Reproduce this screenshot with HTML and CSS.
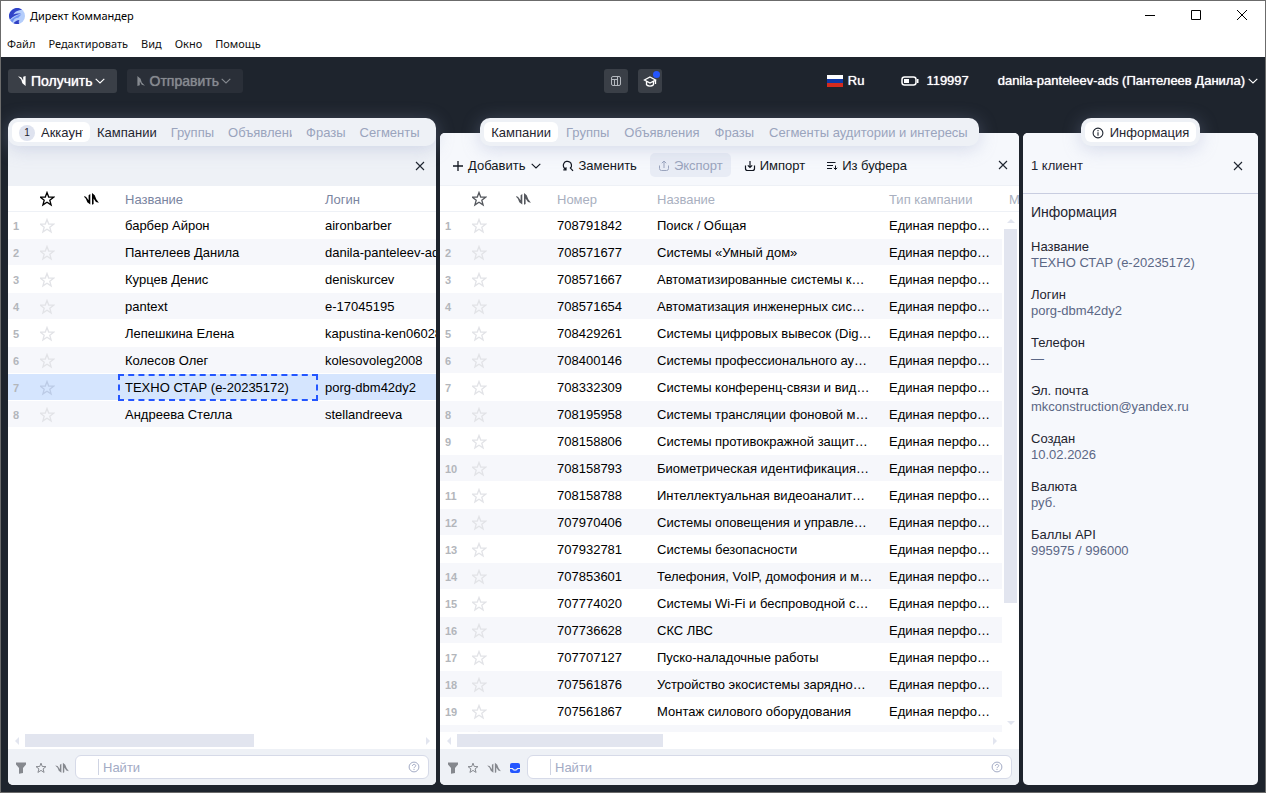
FILE: index.html
```html
<!DOCTYPE html>
<html lang="ru">
<head>
    <meta charset="UTF-8">
    <meta name="viewport" content="width=device-width, initial-scale=1.0">
    <title>Директ Коммандер</title>
    <link rel="stylesheet" href="styles.css">
</head>
<body>
    <svg class="sprite" aria-hidden="true">
        <symbol id="star" viewBox="0 0 16 16"><path d="M8 1.500l1.700 4.500 4.900.2-3.800 3 1.300 4.700L8 11.200l-4.100 2.700 1.300-4.700-3.800-3 4.900-.2z" fill="none" stroke="currentColor" stroke-width="1.300"/></symbol>
        <symbol id="get" viewBox="0 0 8 10"><path d="M0 .3L3.200 1.200 5.200 4.500V.8L7.600 0v10L4.400 7.200 3.200 3.600z" fill="currentColor"/></symbol>
        <symbol id="send" viewBox="0 0 8 10"><path d="M.4 0L3.600 2.800 4.800 6.400l3.200 3.300-3.200-.9L2.800 5.500v3.700L.4 10z" fill="currentColor"/></symbol>
        <symbol id="direct" viewBox="0 0 16 16"><path d="M.2 5l2.800.7 2.600 3.600V4.200L7.300 3v10.500L4.300 11.200 2.900 7.700zM9 2l2.700 2.300 1.600 3.900 2.600 3.500-2.900-.8-2.400-3.400v5.400L9 13.800z" fill="currentColor"/></symbol>
        <symbol id="chevron" viewBox="0 0 10 6"><path d="M.7.8L5 5 9.300.8" fill="none" stroke="currentColor" stroke-width="1.100"/></symbol>
        <symbol id="close" viewBox="0 0 10 10"><path d="M1 1l8 8M9 1L1 9" fill="none" stroke="currentColor" stroke-width="1.100"/></symbol>
        <symbol id="filter" viewBox="0 0 12 12"><path d="M1 .5h10v2L8 6v5l-4 .8V6L1 2.500z" fill="currentColor"/></symbol>
        <symbol id="help" viewBox="0 0 12 12"><g fill="none" stroke="currentColor"><circle cx="6" cy="6" r="4.900"/><path d="M4.400 5c0-2.200 3.300-2.100 3.300-.2C7.700 5.900 6 5.900 6 7.200M6 8v1"/></g></symbol>
    </svg>

    <header class="titlebar">
        <svg class="logo" viewBox="0 0 16 16">
            <circle cx="8" cy="8" r="8" fill="#b4cdfb"/>
            <path d="M.9 11.500A8 8 0 0 1 13.200 1.900C9 2 5.500 3.500 4.500 6.500c2-1 5-1.300 7.500-.8C8 6.500 3.500 8.500.9 11.500z" fill="#3043c8"/>
            <path d="M1.300 12.300C4 9.500 8 7.500 12.500 6.200L9.300 9.800c-2.500.2-4.500 1.200-5.800 4.700z" fill="#6f92f2"/>
            <path d="M4.500 15.200C6 13.500 8 12.200 10.500 12c-1 1.200-1 2.400-.2 3.700a8 8 0 0 1-5.800-.5z" fill="#2f3fc4"/>
        </svg>
        <h1>Директ Коммандер</h1>
        <div class="window-buttons">
            <button aria-label="Свернуть"><svg viewBox="0 0 12 12"><path d="M1 5.500h10" stroke="#000"/></svg></button>
            <button aria-label="Развернуть"><svg viewBox="0 0 12 12"><path d="M1.500.5h9v9h-9z" fill="none" stroke="#000"/></svg></button>
            <button aria-label="Закрыть"><svg viewBox="0 0 12 12"><path d="M1 0l10 10M11 0L1 10" stroke="#000"/></svg></button>
        </div>
    </header>

    <nav class="menu">
        <a href="#">Файл</a>
        <a href="#">Редактировать</a>
        <a href="#">Вид</a>
        <a href="#">Окно</a>
        <a href="#">Помощь</a>
    </nav>

    <main class="app">
        <div class="topbar">
            <div class="side">
                <button class="dark-btn"><svg class="arrow"><use href="#get"/></svg>Получить<svg class="chevron"><use href="#chevron"/></svg></button>
                <button class="dark-btn muted" disabled><svg class="arrow"><use href="#send"/></svg>Отправить<svg class="chevron"><use href="#chevron"/></svg></button>
            </div>
            <div class="center">
                <button class="square-btn" aria-label="Панели"><svg viewBox="0 0 14 14"><g fill="none" stroke="#b4b8be"><rect x="2.500" y="2.500" width="9" height="9" rx="1.500"/><path d="M2.500 5.500H8.500M5.500 5.500v6M8.500 2.500v9"/></g></svg></button>
                <button class="square-btn" aria-label="Обучение"><svg viewBox="0 0 14 14"><g fill="none" stroke="#fff" stroke-width="1.300"><path d="M7 3L12.500 6 7 9 1.500 6zM3.500 7.500v3.200c1.800 1.800 5.200 1.800 7 0V7.500M12.500 6v4"/></g></svg><span class="dot"></span></button>
            </div>
            <div class="side right">
                <button class="plain-btn"><svg class="flag" viewBox="0 0 16 12"><path fill="#fff" d="M0 0h16v4H0z"/><path fill="#1039a5" d="M0 4h16v4H0z"/><path fill="#d52b1e" d="M0 8h16v4H0z"/></svg>Ru</button>
                <span class="points"><svg class="battery" viewBox="0 0 18 10"><rect x="1" y="1" width="14" height="8" rx="2.500" fill="none" stroke="#fff" stroke-width="1.500"/><path d="M3 3h5v4H3zM16 3h1.500v4H16z" fill="#fff"/></svg>119997</span>
                <button class="plain-btn">danila-panteleev-ads (Пантелеев Данила)<svg class="chevron"><use href="#chevron"/></svg></button>
            </div>
        </div>

        <div class="panels">
            <section class="panel accounts">
                <nav class="tabs">
                    <button class="tab active"><span class="count">1</span><span class="clip">Аккаунты</span></button>
                    <button class="tab dark">Кампании</button>
                    <button class="tab">Группы</button>
                    <button class="tab narrow"><span class="clip">Объявления</span></button>
                    <button class="tab">Фразы</button>
                    <button class="tab">Сегменты</button>
                </nav>
                <div class="panel-head">
                    <button class="close" aria-label="Закрыть"><svg><use href="#close"/></svg></button>
                </div>
                <div class="table-wrap">
                    <table>
                        <colgroup><col class="c-num"><col class="c-star"><col class="c-direct"><col class="c-client"><col class="c-client"></colgroup>
                        <thead>
                            <tr><th></th><th class="icon"><svg><use href="#star"/></svg></th><th class="icon"><svg><use href="#direct"/></svg></th><th>Название</th><th>Логин</th></tr>
                        </thead>
                        <tbody id="accounts"></tbody>
                    </table>
                </div>
                <div class="hscroll"><i class="left"></i><div class="thumb"></div><i class="right"></i></div>
                <div class="panel-foot">
                    <button aria-label="Фильтр"><svg><use href="#filter"/></svg></button>
                    <button aria-label="Избранное"><svg><use href="#star"/></svg></button>
                    <button aria-label="Директ"><svg class="wide"><use href="#direct"/></svg></button>
                    <label class="search"><input type="text" placeholder="Найти" aria-label="Найти"><svg><use href="#help"/></svg></label>
                </div>
            </section>

            <section class="panel campaigns">
                <nav class="tabs">
                    <button class="tab active">Кампании</button>
                    <button class="tab">Группы</button>
                    <button class="tab">Объявления</button>
                    <button class="tab">Фразы</button>
                    <button class="tab">Сегменты аудитории и интересы</button>
                </nav>
                <div class="panel-head">
                    <button class="tool"><svg viewBox="0 0 12 12"><path d="M6 1v10M1 6h10" stroke="currentColor" stroke-width="1.300"/></svg>Добавить<svg class="chevron"><use href="#chevron"/></svg></button>
                    <button class="tool"><svg viewBox="0 0 12 12"><g fill="none" stroke="currentColor" stroke-width="1.200"><path d="M3.800 9.200A4.100 4.100 0 1 1 8.600 8M8 7.500l3 3.300M1.300 9.800h2.700V7.200"/></g></svg>Заменить</button>
                    <button class="tool disabled" disabled><svg viewBox="0 0 12 12"><path d="M1.500 5.500v3q0 2 2 2h5q2 0 2-2v-3M6 8V1M3.800 3.200L6 1l2.200 2.200" fill="none" stroke="currentColor"/></svg>Экспорт</button>
                    <button class="tool"><svg viewBox="0 0 12 12"><path d="M1.500 5.500v3q0 2 2 2h5q2 0 2-2v-3M6 1v6.500M3.800 5.300L6 7.500l2.200-2.200" fill="none" stroke="currentColor" stroke-width="1.200"/></svg>Импорт</button>
                    <button class="tool"><svg viewBox="0 0 12 12"><path d="M1 2.500h8.500M1 5.500h6M1 8.500h5M9.500 5.500v4M7.800 7.800l1.700 1.700 1.700-1.700" fill="none" stroke="currentColor"/></svg>Из буфера</button>
                    <button class="close" aria-label="Закрыть"><svg><use href="#close"/></svg></button>
                </div>
                <div class="table-wrap">
                    <table>
                        <colgroup><col class="c-num"><col class="c-star"><col class="c-direct"><col class="c-id"><col class="c-name"><col class="c-type"><col class="c-rest"></colgroup>
                        <thead>
                            <tr><th></th><th class="icon"><svg><use href="#star"/></svg></th><th class="icon"><svg><use href="#direct"/></svg></th><th>Номер</th><th>Название</th><th>Тип кампании</th><th>М</th></tr>
                        </thead>
                        <tbody id="campaigns"></tbody>
                    </table>
                    <div class="vscroll"><i class="up"></i><div class="thumb"></div><i class="down"></i></div>
                </div>
                <div class="hscroll"><i class="left"></i><div class="thumb"></div><i class="right"></i></div>
                <div class="panel-foot">
                    <button aria-label="Фильтр"><svg><use href="#filter"/></svg></button>
                    <button aria-label="Избранное"><svg><use href="#star"/></svg></button>
                    <button aria-label="Директ"><svg class="wide"><use href="#direct"/></svg></button>
                    <button class="on" aria-label="Архив"><svg viewBox="0 0 12 12"><rect x="1" y="1" width="10" height="10" rx="2" fill="currentColor"/><path d="M1 6.500h2.500c.8 2.200 4.200 2.200 5 0H11" fill="none" stroke="#eef1f6" stroke-width="1.200"/></svg></button>
                    <label class="search"><input type="text" placeholder="Найти" aria-label="Найти"><svg><use href="#help"/></svg></label>
                </div>
            </section>

            <section class="panel info">
                <nav class="tabs">
                    <button class="tab active"><svg viewBox="0 0 12 12"><g fill="none" stroke="currentColor" stroke-width="1.100"><circle cx="6" cy="6" r="4.900"/><path d="M6 5.200v3.600M6 3v1.200"/></g></svg>Информация</button>
                </nav>
                <div class="panel-head">
                    <span>1 клиент</span>
                    <button class="close" aria-label="Закрыть"><svg><use href="#close"/></svg></button>
                </div>
                <div class="info-body">
                    <h2>Информация</h2>
                    <dl>
                        <div><dt>Название</dt><dd>ТЕХНО СТАР (e-20235172)</dd></div>
                        <div><dt>Логин</dt><dd>porg-dbm42dy2</dd></div>
                        <div><dt>Телефон</dt><dd>—</dd></div>
                        <div><dt>Эл. почта</dt><dd>mkconstruction@yandex.ru</dd></div>
                        <div><dt>Создан</dt><dd>10.02.2026</dd></div>
                        <div><dt>Валюта</dt><dd>руб.</dd></div>
                        <div><dt>Баллы API</dt><dd>995975 / 996000</dd></div>
                    </dl>
                </div>
            </section>
        </div>
    </main>

    <script>
        const accounts = [
            ['барбер Айрон', 'aironbarber'],
            ['Пантелеев Данила', 'danila-panteleev-ads'],
            ['Курцев Денис', 'deniskurcev'],
            ['pantext', 'e-17045195'],
            ['Лепешкина Елена', 'kapustina-ken060286'],
            ['Колесов Олег', 'kolesovoleg2008'],
            ['ТЕХНО СТАР (e-20235172)', 'porg-dbm42dy2'],
            ['Андреева Стелла', 'stellandreeva']
        ];

        const campaigns = [
            ['708791842', 'Поиск / Общая'],
            ['708571677', 'Системы «Умный дом»'],
            ['708571667', 'Автоматизированные системы к…'],
            ['708571654', 'Автоматизация инженерных сис…'],
            ['708429261', 'Системы цифровых вывесок (Dig…'],
            ['708400146', 'Системы профессионального ау…'],
            ['708332309', 'Системы конференц-связи и вид…'],
            ['708195958', 'Системы трансляции фоновой м…'],
            ['708158806', 'Системы противокражной защит…'],
            ['708158793', 'Биометрическая идентификация…'],
            ['708158788', 'Интеллектуальная видеоаналит…'],
            ['707970406', 'Системы оповещения и управле…'],
            ['707932781', 'Системы безопасности'],
            ['707853601', 'Телефония, VoIP, домофония и м…'],
            ['707774020', 'Системы Wi-Fi и беспроводной с…'],
            ['707736628', 'СКС ЛВС'],
            ['707707127', 'Пуско-наладочные работы'],
            ['707561876', 'Устройство экосистемы зарядно…'],
            ['707561867', 'Монтаж силового оборудования']
        ];

        const rowStart = (num) => `<td class="num">${num}</td><td class="icon"><svg><use href="#star"/></svg></td><td></td>`;

        document.getElementById('accounts').innerHTML = accounts.map(([name, login], i) =>
            `<tr${i === 6 ? ' class="selected"' : ''}>${rowStart(i + 1)}<td${i === 6 ? ' class="focus"' : ''}>${name}</td><td>${login}</td></tr>`
        ).join('');

        document.getElementById('campaigns').innerHTML = campaigns.map(([id, name], i) =>
            `<tr>${rowStart(i + 1)}<td>${id}</td><td>${name}</td><td>Единая перфо…</td><td class="blank"></td></tr>`
        ).join('') + `<tr>${rowStart('')}<td></td><td></td><td></td><td class="blank"></td></tr>`;
    </script>
</body>
</html>
```

FILE: styles.css
```css
:root {
    --dark: #1e242d;
    --text: #1f2530;
    --muted: #9aa4bd;
    --panel: #f6f8fc;
    --gray: #eef1f6;
    --scroll: #e2e5ef;
    --blue: #2456ff;
}

* {
    margin: 0;
    padding: 0;
    box-sizing: border-box;
}

body {
    height: 100vh;
    display: flex;
    flex-direction: column;
    overflow: hidden;
    border: 1px solid #6b6b6b;
    background: #fff;
    font: 13px/16px "Liberation Sans", Arial, sans-serif;
    color: var(--text);
}

button {
    border: none;
    background: none;
    font: inherit;
    color: inherit;
    display: flex;
    align-items: center;
    white-space: nowrap;
}

svg {
    width: 12px;
    height: 12px;
    flex: none;
}

.sprite {
    position: absolute;
    width: 0;
    height: 0;
}

.titlebar {
    height: 30px;
    display: flex;
    align-items: center;
    padding-left: 8px;
    gap: 5px;
    color: #000;
}

.titlebar h1,
.menu {
    font: 11px/16px "Noto Sans", sans-serif;
}

.logo {
    width: 16px;
    height: 16px;
}

.window-buttons {
    display: flex;
    margin-left: auto;
}

.window-buttons button {
    width: 46px;
    height: 30px;
    justify-content: center;
}

.menu {
    height: 26px;
    display: flex;
    align-items: center;
    gap: 13px;
    padding-left: 6px;
}

.menu a {
    color: #111;
    text-decoration: none;
}

.app {
    flex: 1;
    min-height: 0;
    display: flex;
    flex-direction: column;
    padding: 12px 7px 7px;
    background: var(--dark);
}

.topbar {
    display: flex;
    height: 24px;
    color: #fff;
    text-shadow: 0 0 1px currentColor;
}

.side {
    flex: 1 0 0;
    display: flex;
    gap: 10px;
}

.side.right {
    justify-content: flex-end;
    align-items: center;
    gap: 29px;
}

.center {
    display: flex;
    gap: 10px;
}

.dark-btn {
    padding: 0 12px 0 10px;
    gap: 2px;
    border-radius: 3px;
    background: #3a3f47;
    font-size: 14px;
    text-shadow: inherit;
}

.dark-btn.muted {
    background: #2a2f38;
    color: #868a90;
}

.arrow {
    width: 8px;
    height: 10px;
    margin-right: 3px;
}

.chevron {
    width: 10px;
    height: 6px;
}

.square-btn {
    position: relative;
    width: 24px;
    justify-content: center;
    border-radius: 3px;
    background: #3a3f47;
}

.square-btn svg {
    width: 14px;
    height: 14px;
}

.dot {
    position: absolute;
    top: 2px;
    right: 2px;
    width: 7px;
    height: 7px;
    border-radius: 50%;
    background: var(--blue);
}

.plain-btn {
    gap: 3px;
    text-shadow: inherit;
}

.flag {
    width: 16px;
    margin-right: 2px;
}

.points {
    display: flex;
    align-items: center;
    gap: 7px;
    margin-left: 8px;
}

.battery {
    width: 18px;
    height: 10px;
}

.panels {
    flex: 1;
    min-height: 0;
    display: flex;
    gap: 4px;
    padding-top: 40px;
}

.panel {
    display: flex;
    flex-direction: column;
    min-width: 0;
    border-radius: 5px;
    background: #fff;
}

.accounts {
    flex: 428 1 0;
}

.campaigns {
    flex: 579 1 0;
}

.info {
    flex: 235 1 0;
    background: var(--panel);
}

/* the tab strip hangs over the top edge of its panel */
.tabs {
    position: relative;
    align-self: center;
    display: flex;
    gap: 1px;
    height: 28px;
    margin: -15px 0 -13px;
    padding: 4px;
    border-radius: 10px;
    background: var(--gray);
    box-shadow: 0 3px 18px rgba(150, 160, 200, 0.35);
}

.accounts .tabs {
    align-self: stretch;
    gap: 0;
}

.tab {
    flex: none;
    min-width: 0;
    padding: 1px 7px 0;
    border-radius: 6px;
    color: var(--muted);
}

.tab.active {
    background: #fff;
    color: var(--text);
}

.tab.dark {
    color: var(--text);
}

.accounts .tab.active,
.tab.narrow {
    width: 78px;
}

.info .tab.active {
    gap: 6px;
}

.clip {
    min-width: 0;
    overflow: hidden;
}

.count {
    flex: none;
    width: 16px;
    height: 16px;
    margin-right: 6px;
    border-radius: 50%;
    background: #dfe3ef;
    font-size: 10px;
    text-align: center;
}

.panel-head {
    display: flex;
    align-items: center;
    height: 53px;
    padding: 12px 7px 0 8px;
    border-radius: 5px 5px 0 0;
    background: var(--panel);
}

.accounts .panel-head {
    background: var(--gray);
}

.campaigns .panel-head {
    border-bottom: 1px solid var(--gray);
}

.info .panel-head {
    height: 61px;
    padding-bottom: 7px;
    border-bottom: 1px solid #c8cde0;
}

.close {
    width: 18px;
    height: 18px;
    justify-content: center;
    margin-left: auto;
}

.info .close {
    margin-right: 4px;
}

.close svg {
    width: 10px;
    height: 10px;
}

.tool {
    height: 24px;
    padding: 1px 8px 0;
    margin-right: 5px;
    gap: 4px;
    border-radius: 5px;
    color: #111620;
}

.tool:first-child {
    padding-left: 4px;
}

.tool .chevron {
    margin-left: 2px;
}

.tool.disabled {
    background: #e8ecf5;
    color: var(--muted);
}

.table-wrap {
    position: relative;
    flex: 1;
    min-height: 0;
    overflow: hidden;
}

table {
    width: 100%;
    table-layout: fixed;
    border-spacing: 0;
    color: #000;
}

.accounts table {
    width: 510px;
}

.c-num { width: 32px; }
.c-star { width: 44px; }
.c-direct { width: 34px; }
.c-client { width: 200px; }
.c-id { width: 100px; }
.c-type { width: 120px; }
.c-rest { width: 17px; }

th {
    height: 26px;
    padding: 2px 7px 0;
    border-bottom: 1px solid var(--gray);
    color: #7a859f;
    font-weight: normal;
    text-align: left;
    overflow: hidden;
    white-space: nowrap;
}

.campaigns th {
    color: #a9b0c0;
}

td {
    height: 27px;
    padding: 2px 7px 0;
    border-bottom: 1px solid #fff;
    overflow: hidden;
    text-overflow: ellipsis;
    white-space: nowrap;
}

tbody tr:nth-child(even) td {
    background: #f6f7fb;
}

tbody tr.selected td {
    background: #d5e5fe;
}

tbody tr td.blank {
    background: none;
}

td.num {
    padding-left: 5px;
    color: #b3b6bb;
    font-size: 11px;
    font-weight: bold;
}

th.icon,
td.icon {
    padding: 1px 0 0;
    color: #000;
}

.campaigns th.icon {
    color: #55585e;
}

td.icon {
    color: #e2e3e7;
}

.campaigns td.icon {
    color: #e2e3e7;
}

.selected td.icon {
    color: #bccbe6;
}

.icon svg {
    display: block;
    width: 16px;
    height: 16px;
    margin-left: -1px;
}

td.focus {
    outline: 2px dashed var(--blue);
    outline-offset: -2px;
}

.hscroll {
    display: flex;
    align-items: center;
    height: 17px;
    padding: 0 6px;
    gap: 6px;
}

.hscroll .thumb {
    height: 13px;
    background: var(--scroll);
}

.accounts .hscroll .thumb {
    flex: 0 0 229px;
}

.campaigns .hscroll .thumb {
    flex: 0 0 206px;
}

.campaigns .hscroll {
    padding-right: 22px;
}

.hscroll i,
.vscroll i {
    border: 4px solid transparent;
}

i.left {
    border-left-width: 0;
    border-right-color: var(--scroll);
    margin-left: 1px;
}

i.right {
    border-right-width: 0;
    border-left-color: var(--scroll);
    margin-left: auto;
}

i.up {
    border-top-width: 0;
    border-bottom-color: var(--scroll);
}

i.down {
    border-bottom-width: 0;
    border-top-color: var(--scroll);
}

.vscroll {
    position: absolute;
    top: 26px;
    right: 0;
    bottom: 0;
    width: 17px;
    display: flex;
    flex-direction: column;
    align-items: center;
    justify-content: space-between;
    padding: 7px 0;
}

.vscroll .thumb {
    width: 13px;
    height: 374px;
    margin: 6px 0 auto;
    background: var(--scroll);
}

.panel-foot {
    display: flex;
    align-items: center;
    height: 36px;
    padding: 0 7px;
    gap: 8px;
    border-radius: 0 0 5px 5px;
    background: var(--gray);
    color: #85888e;
}

.panel-foot button {
    padding-top: 2px;
}

.panel-foot .wide {
    width: 14px;
    height: 14px;
}

.panel-foot .on {
    color: var(--blue);
}

.search {
    flex: 1;
    display: flex;
    align-items: center;
    height: 24px;
    padding: 3px 8px 3px 22px;
    margin-left: -2px;
    border: 1px solid #d6dae8;
    border-radius: 6px;
    background: #fff;
    color: #a3abc5;
}

.search input {
    flex: 1;
    min-width: 0;
    height: 16px;
    padding: 1px 0 0 4px;
    border: none;
    border-left: 1px solid #cfd4e3;
    outline: none;
    background: none;
    font: inherit;
}

.search input::placeholder {
    color: #a3abc5;
}

.info-body {
    padding: 10px 8px;
}

.info-body h2 {
    font-size: 14px;
    font-weight: normal;
    margin-bottom: 19px;
}

.info-body dl {
    display: flex;
    flex-direction: column;
    gap: 16px;
}

.info-body dd {
    color: #5b6785;
}
```
